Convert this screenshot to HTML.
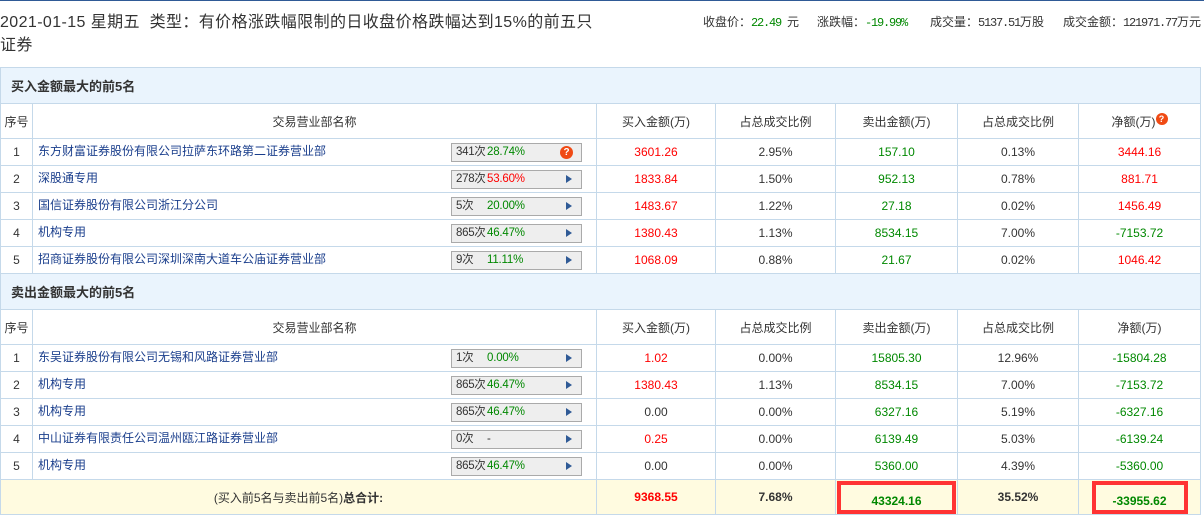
<!DOCTYPE html><html><head><meta charset="utf-8"><style>
*{margin:0;padding:0;box-sizing:border-box}
body{width:1204px;height:516px;overflow:hidden;background:#fff;font-family:"Liberation Sans","Noto Sans CJK SC",sans-serif;color:#333;font-size:12px;position:relative}
.topline{position:absolute;left:0;top:0;width:1204px;height:1px;background:#2f5a96}
.title{position:absolute;left:0;top:11px;width:600px;font-size:16px;line-height:23px;color:#333;letter-spacing:0.4px}
.st{position:absolute;top:14px;font-family:"Noto Sans CJK SC",sans-serif;font-size:12px;line-height:16px;color:#333;white-space:nowrap}
.m{font-family:"Liberation Mono",sans-serif;font-size:12px;letter-spacing:-1.2px}
.g{color:#080}.r{color:#f00}
table{position:absolute;left:0;border-collapse:collapse;table-layout:fixed;width:1200px}
td{border:1px solid #c5d9ea;text-align:center;font-size:12px;white-space:nowrap;overflow:hidden}
.sec td{background:#eaf4fd;text-align:left;font-weight:bold;font-size:13px;padding-left:10px;height:36px;color:#333}
.hd td{height:35px}
.dr td{height:27px}
.nm{text-align:left;padding-left:5px;position:relative;padding-bottom:3px}
.nm a{color:#1a3e8c;text-decoration:none}
.bd{position:absolute;left:418px;top:4px;width:131px;height:19px;background:#eee;border:1px solid #aaa;font-size:11.5px;line-height:17px;color:#333}
.bd .c{position:absolute;left:4px;letter-spacing:-0.3px}.bd .p{position:absolute;left:35px;color:#080;letter-spacing:-0.2px}.bd .p.r{color:#f00}
.bd .a{position:absolute;left:114px;top:4px;width:0;height:0;border-left:6px solid #2f5a96;border-top:4px solid transparent;border-bottom:4px solid transparent}
.q{position:absolute;left:108px;top:2px;width:13px;height:13px;border-radius:50%;background:#f04a14;color:#fff;font-size:10px;font-weight:bold;line-height:13px;text-align:center}
.tot td{height:35px;background:#fffbe0;font-weight:bold}
.box{display:inline-block;border:4px solid #f33;padding:4px 0;width:119px;height:33px;line-height:24px}
</style></head><body>
<div class="topline"></div>
<div class="title">2021-01-15 星期五&nbsp; 类型：有价格涨跌幅限制的日收盘价格跌幅达到15%的前五只证券</div>
<span class="st" style="left:703px">收盘价：<span class="m g">22.49 </span>元</span>
<span class="st" style="left:817px">涨跌幅：<span class="m g">-19.99%</span></span>
<span class="st" style="left:930px">成交量：<span class="m">5137.51</span>万股</span>
<span class="st" style="left:1063px">成交金额：<span class="m">121971.77</span>万元</span>
<table style="top:67px">
<colgroup><col style="width:32px"><col style="width:564px"><col style="width:119px"><col style="width:120px"><col style="width:122px"><col style="width:121px"><col style="width:122px"></colgroup>
<tr class="sec"><td colspan="7">买入金额最大的前5名</td></tr>
<tr class="hd"><td>序号</td><td>交易营业部名称</td><td>买入金额(万)</td><td>占总成交比例</td><td>卖出金额(万)</td><td>占总成交比例</td><td>净额(万)<span style="display:inline-block;width:12px;height:12px;border-radius:50%;background:#f04a14;color:#fff;font-size:9px;line-height:12px;vertical-align:top;font-weight:bold">?</span></td></tr>
<tr class="dr"><td>1</td><td class="nm"><a>东方财富证券股份有限公司拉萨东环路第二证券营业部</a><div class="bd"><span class="c">341次</span><span class="p">28.74%</span><span class="q">?</span></div></td><td class="r">3601.26</td><td>2.95%</td><td class="g">157.10</td><td>0.13%</td><td class="r">3444.16</td></tr>
<tr class="dr"><td>2</td><td class="nm"><a>深股通专用</a><div class="bd"><span class="c">278次</span><span class="p r">53.60%</span><span class="a"></span></div></td><td class="r">1833.84</td><td>1.50%</td><td class="g">952.13</td><td>0.78%</td><td class="r">881.71</td></tr>
<tr class="dr"><td>3</td><td class="nm"><a>国信证券股份有限公司浙江分公司</a><div class="bd"><span class="c">5次</span><span class="p">20.00%</span><span class="a"></span></div></td><td class="r">1483.67</td><td>1.22%</td><td class="g">27.18</td><td>0.02%</td><td class="r">1456.49</td></tr>
<tr class="dr"><td>4</td><td class="nm"><a>机构专用</a><div class="bd"><span class="c">865次</span><span class="p">46.47%</span><span class="a"></span></div></td><td class="r">1380.43</td><td>1.13%</td><td class="g">8534.15</td><td>7.00%</td><td class="g">-7153.72</td></tr>
<tr class="dr"><td>5</td><td class="nm"><a>招商证券股份有限公司深圳深南大道车公庙证券营业部</a><div class="bd"><span class="c">9次</span><span class="p">11.11%</span><span class="a"></span></div></td><td class="r">1068.09</td><td>0.88%</td><td class="g">21.67</td><td>0.02%</td><td class="r">1046.42</td></tr>
<tr class="sec"><td colspan="7">卖出金额最大的前5名</td></tr>
<tr class="hd"><td>序号</td><td>交易营业部名称</td><td>买入金额(万)</td><td>占总成交比例</td><td>卖出金额(万)</td><td>占总成交比例</td><td>净额(万)</td></tr>
<tr class="dr"><td>1</td><td class="nm"><a>东吴证券股份有限公司无锡和风路证券营业部</a><div class="bd"><span class="c">1次</span><span class="p">0.00%</span><span class="a"></span></div></td><td class="r">1.02</td><td>0.00%</td><td class="g">15805.30</td><td>12.96%</td><td class="g">-15804.28</td></tr>
<tr class="dr"><td>2</td><td class="nm"><a>机构专用</a><div class="bd"><span class="c">865次</span><span class="p">46.47%</span><span class="a"></span></div></td><td class="r">1380.43</td><td>1.13%</td><td class="g">8534.15</td><td>7.00%</td><td class="g">-7153.72</td></tr>
<tr class="dr"><td>3</td><td class="nm"><a>机构专用</a><div class="bd"><span class="c">865次</span><span class="p">46.47%</span><span class="a"></span></div></td><td>0.00</td><td>0.00%</td><td class="g">6327.16</td><td>5.19%</td><td class="g">-6327.16</td></tr>
<tr class="dr"><td>4</td><td class="nm"><a>中山证券有限责任公司温州瓯江路证券营业部</a><div class="bd"><span class="c">0次</span><span class="p" style="color:#333">-</span><span class="a"></span></div></td><td class="r">0.25</td><td>0.00%</td><td class="g">6139.49</td><td>5.03%</td><td class="g">-6139.24</td></tr>
<tr class="dr"><td>5</td><td class="nm"><a>机构专用</a><div class="bd"><span class="c">865次</span><span class="p">46.47%</span><span class="a"></span></div></td><td>0.00</td><td>0.00%</td><td class="g">5360.00</td><td>4.39%</td><td class="g">-5360.00</td></tr>
<tr class="tot"><td colspan="2" style="font-weight:normal">(买入前5名与卖出前5名)<b>总合计:</b></td><td class="r">9368.55</td><td>7.68%</td><td class="g"><span class="box">43324.16</span></td><td>35.52%</td><td class="g"><span class="box" style="width:96px">-33955.62</span></td></tr>
</table>
</body></html>
